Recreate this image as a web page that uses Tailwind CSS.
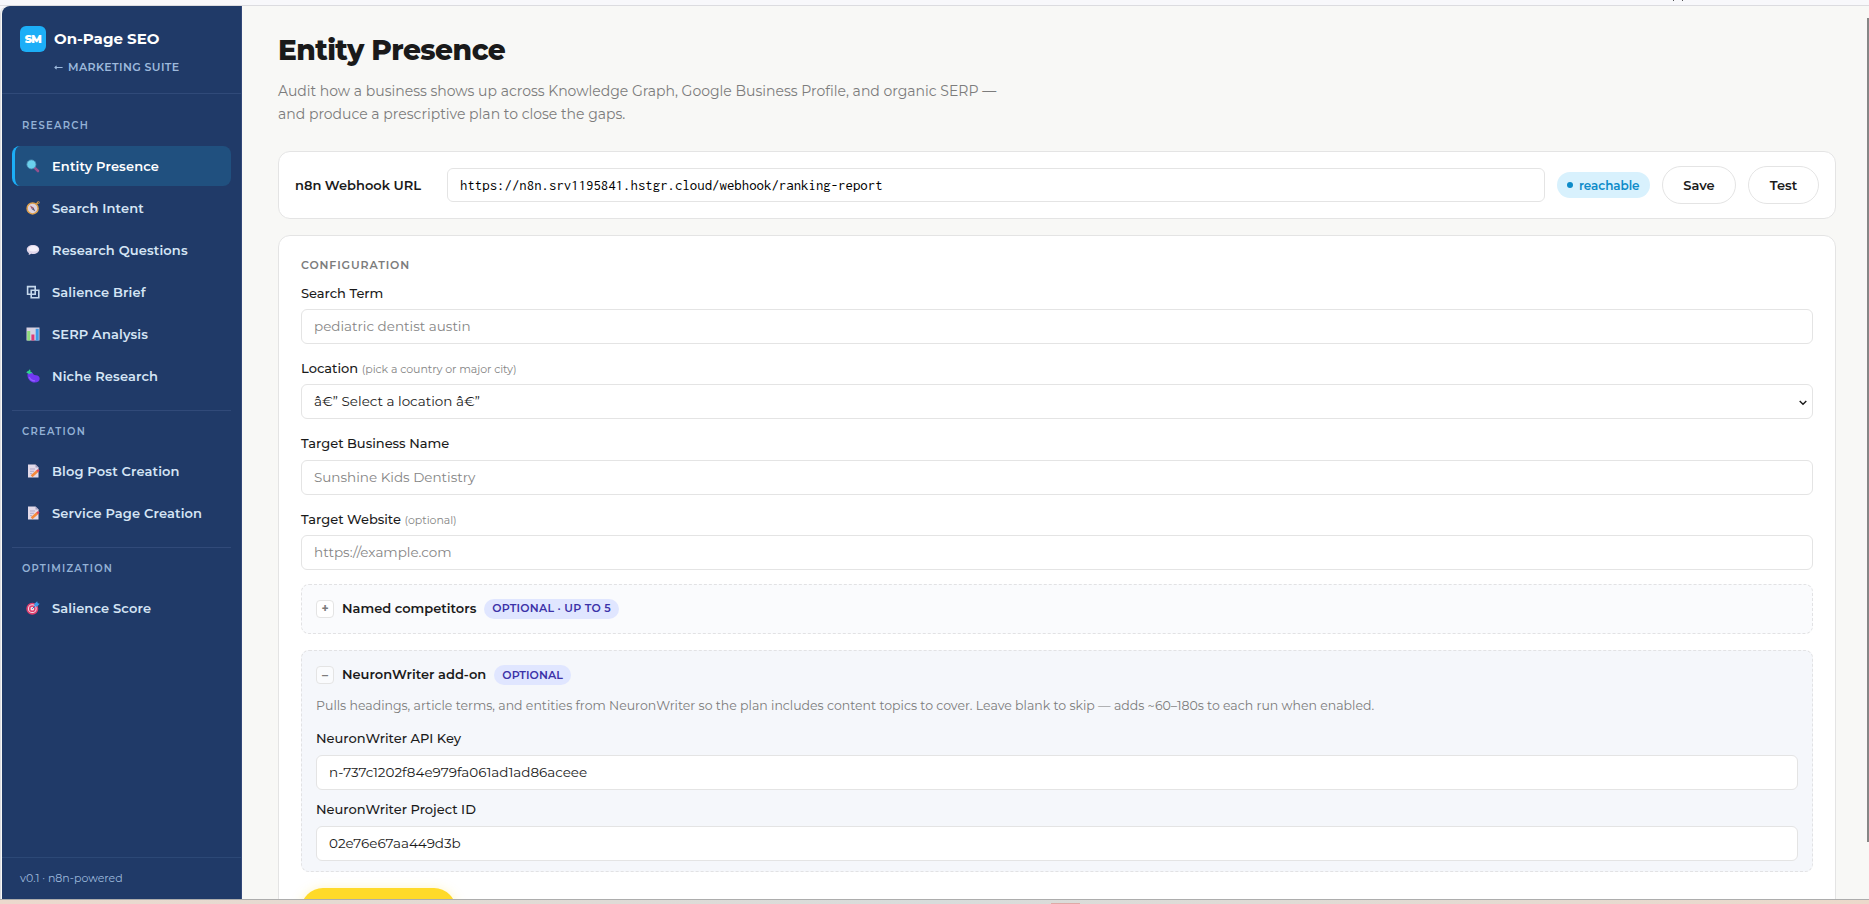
<!DOCTYPE html>
<html lang="en">
<head>
<meta charset="utf-8">
<title>Entity Presence</title>
<script src="https://cdn.jsdelivr.net/npm/@tailwindcss/browser@4"></script>
</head>
<body class="relative flex h-[904px] w-[1869px] flex-col overflow-hidden bg-[#f8f8fb] font-['Montserrat','Inter',sans-serif] text-[#1a1a1a]">
<div class="h-[6px] shrink-0 border-b border-[#dcdce0] bg-[#f8f8fb]"></div>
<div class="absolute left-[1673px] top-0 h-px w-px bg-[#555]"></div>
<div class="absolute left-[1682px] top-0 h-px w-px bg-[#555]"></div>

<div class="flex h-[893px] shrink-0 overflow-hidden rounded-tl-[8px] border-l border-[#dcdce0] bg-[#f8f8f6] pl-px">

  <aside class="flex w-[240px] shrink-0 flex-col overflow-hidden whitespace-nowrap rounded-tl-[8px] border-r border-[#34497a] bg-[#203a68]">
    <div class="h-[88px] shrink-0 border-b border-[#304a79] pl-[18px] pt-[20px]">
      <div class="flex items-center gap-2">
        <div class="flex size-[26px] items-center justify-center rounded-[6px] bg-[#1caef7] text-[11px] font-black tracking-[-0.5px] text-white">SM</div>
        <div class="text-[15px] font-bold leading-[20px] text-white">On-Page SEO</div>
      </div>
      <div class="mt-[7px] flex items-center pl-[34px] text-[11px] font-semibold leading-[16px] tracking-[0.38px] text-[#9db9dc]">
        <svg class="mr-[5px] h-[8px] w-[9px]" viewBox="0 0 9 8" fill="none" stroke="currentColor" stroke-width="1.1"><path d="M8.600 4.500H1M2.600 2.900 1 4.500 2.600 6.100"/></svg>MARKETING SUITE
      </div>
    </div>

    <nav class="flex grow flex-col px-[10px] text-[13px] font-semibold tracking-[0.14px] text-[#d5e5f5]">
      <div class="mt-[24px] h-[16px] pl-[10px] text-[10px] leading-[16px] tracking-[1.25px] text-[#94b2d6]">RESEARCH</div>

      <a class="mt-[12px] flex h-[40px] items-center gap-[12px] rounded-[8px] border-l-[3px] border-[#1caef7] bg-[#20507f] pl-[11px] text-white">
        <svg class="size-[14px]" viewBox="0 0 14 14"><path d="M8.800 8.800 12 12" stroke="#93518e" stroke-width="2.600" stroke-linecap="round"/><circle cx="5.400" cy="5.400" r="4.500" fill="#6bd0ec" stroke="#4f93b8" stroke-width=".8"/></svg><span class="pt-px">Entity Presence</span></a>
      <a class="mt-[2px] flex h-[40px] items-center gap-[12px] pl-[14px]">
        <svg class="size-[14px]" viewBox="0 0 14 14"><path d="m10.200 3.200 1.800-2" stroke="#d99a3c" stroke-width="1.400"/><circle cx="12.400" cy="1.500" r="1" fill="none" stroke="#e0a04a" stroke-width=".8"/><circle cx="6.600" cy="7.400" r="5.500" fill="#ddd3df" stroke="#dfa04b" stroke-width="1.500"/><path d="M4 4.600 7.500 6.500 5.800 8.200Z" fill="#a35368"/><path d="M9.400 10.400 7.500 6.500 5.800 8.200Z" fill="#5a5878"/></svg><span class="pt-px">Search Intent</span></a>
      <a class="mt-[2px] flex h-[40px] items-center gap-[12px] pl-[14px]">
        <svg class="size-[14px]" viewBox="0 0 14 14"><path d="M7 2C3.400 2 .8 3.900.8 6.500c0 1.600.8 2.800 2.100 3.600L2.700 12l2.700-1.200c.5.1 1.100.2 1.600.2 3.600 0 6.200-1.900 6.200-4.500S10.600 2 7 2Z" fill="#e0d6ea"/><ellipse cx="7.400" cy="5.700" rx="4.600" ry="2.700" fill="#f5f0fa"/></svg><span class="pt-px">Research Questions</span></a>
      <a class="mt-[2px] flex h-[40px] items-center gap-[12px] pl-[14px]">
        <svg class="size-[14px]" viewBox="0 0 14 14" fill="none" stroke="#c5d8ec" stroke-width="1.600"><path d="M1.600 1.600h7.600v7.600H1.600zM5.200 5.200h7.600v7.600H5.200z"/></svg><span class="pt-px">Salience Brief</span></a>
      <a class="mt-[2px] flex h-[40px] items-center gap-[12px] pl-[14px]">
        <svg class="size-[14px]" viewBox="0 0 14 14"><path d="M.5.500h13v13H.5z" fill="#d8d2e2"/><path d="M1.200 4h3v9.500h-3z" fill="#8fdc7c"/><path d="M5.400 7.500h3v6h-3z" fill="#dd3b78"/><path d="M9.700 1.800h3v11.700h-3z" fill="#3a9bea"/></svg><span class="pt-px">SERP Analysis</span></a>
      <a class="mt-[2px] flex h-[40px] items-center gap-[12px] pl-[14px]">
        <svg class="size-[14px]" viewBox="0 0 14 14"><path d="M1.600 4.400C.8 9.200 4 13.500 8.800 13.500c2.900 0 4.900-1.500 4.900-3.800 0-2.200-1.600-3.400-3.700-3.400-1.900 0-2.500-.4-3.400-2.200C5.600 2.700 2.200 2.600 1.600 4.400Z" fill="#7238f2"/><path d="M3.200 8c1 2.500 3 3.800 5.800 3.800" fill="none" stroke="#9461ff" stroke-width="1.200"/><path d="M.5 3.900C.6 2.600 1.600 2 2.500 2L3.200.400l1.300.7-.3 1.300c1.100.2 1.900 1 2 2-1.400-.5-2.300-.1-3.100.9C2.500 4.400 1.600 3.900.5 3.900Z" fill="#2fd58a"/></svg><span class="pt-px">Niche Research</span></a>

      <div class="mt-[14px] h-px bg-[#314a79]"></div>
      <div class="mt-[12px] h-[16px] pl-[10px] text-[10px] leading-[17px] tracking-[1.25px] text-[#94b2d6]">CREATION</div>
      <a class="mt-[12px] flex h-[40px] items-center gap-[12px] pl-[14px]">
        <svg class="size-[14px]" viewBox="0 0 14 14"><path d="M2 .500h7.500l3 3v10H2z" fill="#e3dae9"/><path d="M9.500.500v3h3z" fill="#a89fc0"/><path d="M4 5h5M4 7.300h4M4 9.600h2" stroke="#afa4c4" stroke-width=".9"/><path d="M5.600 12.200 11.500 7" stroke="#f58a3c" stroke-width="2.600"/><path d="m11.200 7.300 1.600-1.400" stroke="#e0445e" stroke-width="2.400"/></svg><span class="pt-px">Blog Post Creation</span></a>
      <a class="mt-[2px] flex h-[40px] items-center gap-[12px] pl-[14px]">
        <svg class="size-[14px]" viewBox="0 0 14 14"><path d="M2 .500h7.500l3 3v10H2z" fill="#e3dae9"/><path d="M9.500.500v3h3z" fill="#a89fc0"/><path d="M4 5h5M4 7.300h4M4 9.600h2" stroke="#afa4c4" stroke-width=".9"/><path d="M5.600 12.200 11.500 7" stroke="#f58a3c" stroke-width="2.600"/><path d="m11.200 7.300 1.600-1.400" stroke="#e0445e" stroke-width="2.400"/></svg><span class="pt-px">Service Page Creation</span></a>

      <div class="mt-[14px] h-px bg-[#314a79]"></div>
      <div class="mt-[12px] h-[16px] pl-[10px] text-[10px] leading-[17px] tracking-[1.2px] text-[#94b2d6]">OPTIMIZATION</div>
      <a class="mt-[12px] flex h-[40px] items-center gap-[12px] pl-[14px]">
        <svg class="size-[14px]" viewBox="0 0 14 14"><circle cx="6.300" cy="7.700" r="5.200" fill="#f2dbe6" stroke="#e0406f" stroke-width="1.600"/><circle cx="6.300" cy="7.700" r="2.600" fill="#f2dbe6" stroke="#e0406f" stroke-width="1.500"/><path d="M6.300 7.700 10 4" stroke="#3169b8" stroke-width="1"/><path d="M8.400 5.600V2.800L11.200.300l.5 2 2 .5-2.500 2.800z" fill="#3a9bea"/></svg><span class="pt-px">Salience Score</span></a>
    </nav>

    <div class="h-[42px] shrink-0 border-t border-[#2c4876] pl-[18px] pt-[11px] text-[11px] leading-[18px] text-[#9db9dc]">v0.1 · n8n-powered</div>
  </aside>

  <main class="flex w-[1594px] flex-col whitespace-nowrap pl-[36px] pt-[27px]">
    <h1 class="h-[34px] text-[28px] font-extrabold leading-[34px] tracking-[-0.56px]">Entity Presence</h1>
    <p class="mt-[13px] text-[14px] leading-[23px] text-[#7c7c7c]">Audit how a business shows up across Knowledge Graph, Google Business Profile, and organic SERP —<br>and produce a prescriptive plan to close the gaps.</p>

    <section class="mt-[25px] flex h-[68px] shrink-0 items-center rounded-[12px] border border-[#e4e4e4] bg-white px-[16px]">
      <div class="w-[152px] pt-px text-[13px] font-semibold">n8n Webhook URL</div>
      <div class="flex h-[34px] w-[1098px] items-center rounded-[6px] border border-[#e4e4e4] bg-white pl-[12px] font-['Inconsolata','Liberation_Mono',monospace] text-[14.84px] text-black">https://n8n.srv1195841.hstgr.cloud/webhook/ranking-report</div>
      <div class="ml-[12px] flex h-[26px] w-[93px] items-center gap-[6px] rounded-full bg-[#d8f1fd] pl-[10px] text-[12px] font-semibold tracking-[-0.07px] text-[#0d8bc9]"><span class="size-[6px] rounded-full bg-[#0d8bc9]"></span><span class="pt-px">reachable</span></div>
      <div class="ml-[12px] flex h-[38px] w-[74px] items-center justify-center rounded-full border border-[#e4e4e4] pt-px text-[13px] font-semibold">Save</div>
      <div class="ml-[12px] flex h-[38px] w-[71px] items-center justify-center rounded-full border border-[#e4e4e4] pt-px text-[13px] font-semibold">Test</div>
    </section>

    <section class="mt-[16px] flex h-[720px] shrink-0 flex-col rounded-[12px] border border-[#e4e4e4] bg-white px-[22px] pt-[21px] text-[13px] font-medium">
      <div class="h-[16px] text-[11px] font-semibold leading-[16px] tracking-[0.88px] text-[#7c7c7c]">CONFIGURATION</div>

      <div class="mt-[10px] h-[20px] leading-[20px]">Search Term</div>
      <div class="mt-[6px] flex h-[35px] shrink-0 items-center rounded-[6px] border border-[#e4e4e4] pl-[12px] text-[13.5px] font-normal text-[#858585]">pediatric dentist austin</div>

      <div class="mt-[14px] h-[20px] leading-[20px]">Location <span class="text-[11px] font-normal tracking-[-0.06px] text-[#858585]">(pick a country or major city)</span></div>
      <div class="mt-[6px] flex h-[35px] shrink-0 items-center justify-between rounded-[6px] border border-[#e4e4e4] pl-[12px] pr-[5px] text-[13.5px] font-normal">â€” Select a location â€”
        <svg class="mt-[2px] h-[6px] w-[8px]" viewBox="0 0 8 6" fill="none" stroke="#1a1a1a" stroke-width="1.400"><path d="m.7 1 3.300 3.300L7.300 1"/></svg>
      </div>

      <div class="mt-[14px] h-[20px] leading-[20px]">Target Business Name</div>
      <div class="mt-[7px] flex h-[35px] shrink-0 items-center rounded-[6px] border border-[#e4e4e4] pl-[12px] text-[13.5px] font-normal text-[#858585]">Sunshine Kids Dentistry</div>

      <div class="mt-[14px] h-[20px] leading-[20px]">Target Website <span class="text-[11px] font-normal tracking-[-0.06px] text-[#858585]">(optional)</span></div>
      <div class="mt-[6px] flex h-[35px] shrink-0 items-center rounded-[6px] border border-[#e4e4e4] pl-[12px] text-[13.5px] font-normal text-[#858585]">https://example.com</div>

      <div class="mt-[14px] flex h-[50px] shrink-0 items-center rounded-[8px] border border-dashed border-[#e2e2e4] bg-[#fafbfd] pl-[14px]">
        <span class="flex size-[18px] items-center justify-center rounded-[4px] border border-[#e4e4e4] bg-white text-[12px] font-bold text-[#7c7c7c]">+</span>
        <span class="ml-[8px] font-semibold">Named competitors</span>
        <span class="ml-[8px] flex h-[20px] items-center rounded-full bg-[#e0e6ff] px-[8px] pb-px text-[11px] font-semibold tracking-[0.25px] text-[#3c32a8]">OPTIONAL · UP TO 5</span>
      </div>

      <div class="mt-[16px] flex h-[222px] shrink-0 flex-col rounded-[8px] border border-dashed border-[#e2e2e4] bg-[#f5f7fb] px-[14px] pt-[14px]">
        <div class="flex h-[20px] items-center">
          <span class="flex size-[18px] items-center justify-center rounded-[4px] border border-[#e4e4e4] bg-[#fafbfd] text-[12px] font-bold text-[#7c7c7c]">–</span>
          <span class="ml-[8px] font-semibold">NeuronWriter add-on</span>
          <span class="ml-[8px] flex h-[20px] items-center rounded-full bg-[#e0e6ff] px-[8px] text-[11px] font-semibold tracking-[0.1px] text-[#3c32a8]">OPTIONAL</span>
        </div>
        <div class="mt-[11px] h-[20px] text-[12.5px] font-normal leading-[20px] text-[#7c7c7c]">Pulls headings, article terms, and entities from NeuronWriter so the plan includes content topics to cover. Leave blank to skip — adds ~60–180s to each run when enabled.</div>
        <div class="mt-[12px] h-[20px] leading-[20px]">NeuronWriter API Key</div>
        <div class="mt-[7px] flex h-[35px] shrink-0 items-center rounded-[6px] border border-[#e4e4e4] bg-white pb-px pl-[12px] text-[13.5px] font-normal">n-737c1202f84e979fa061ad1ad86aceee</div>
        <div class="mt-[9px] h-[20px] leading-[20px]">NeuronWriter Project ID</div>
        <div class="mt-[7px] flex h-[35px] shrink-0 items-center rounded-[6px] border border-[#e4e4e4] bg-white pb-px pl-[12px] text-[13.5px] font-normal">02e76e67aa449d3b</div>
      </div>

      <div class="mt-[16px] h-[44px] w-[155px] shrink-0 rounded-full bg-[#ffda29] shadow-[0_2px_12px_rgba(255,218,41,0.35)]"></div>
    </section>
  </main>
</div>

<div class="h-[5px] shrink-0 border-t border-[#adadad] bg-linear-to-r from-[#ecd9cd] via-[#d8dcdb] to-[#ecd9cb]"></div>
<div class="absolute left-[1051px] top-[903px] h-px w-[29px] bg-[#e0a9a6]"></div>
<div class="absolute left-[1867px] top-[18px] h-[824px] w-[2px] bg-[#868686]"></div>
</body>
</html>
